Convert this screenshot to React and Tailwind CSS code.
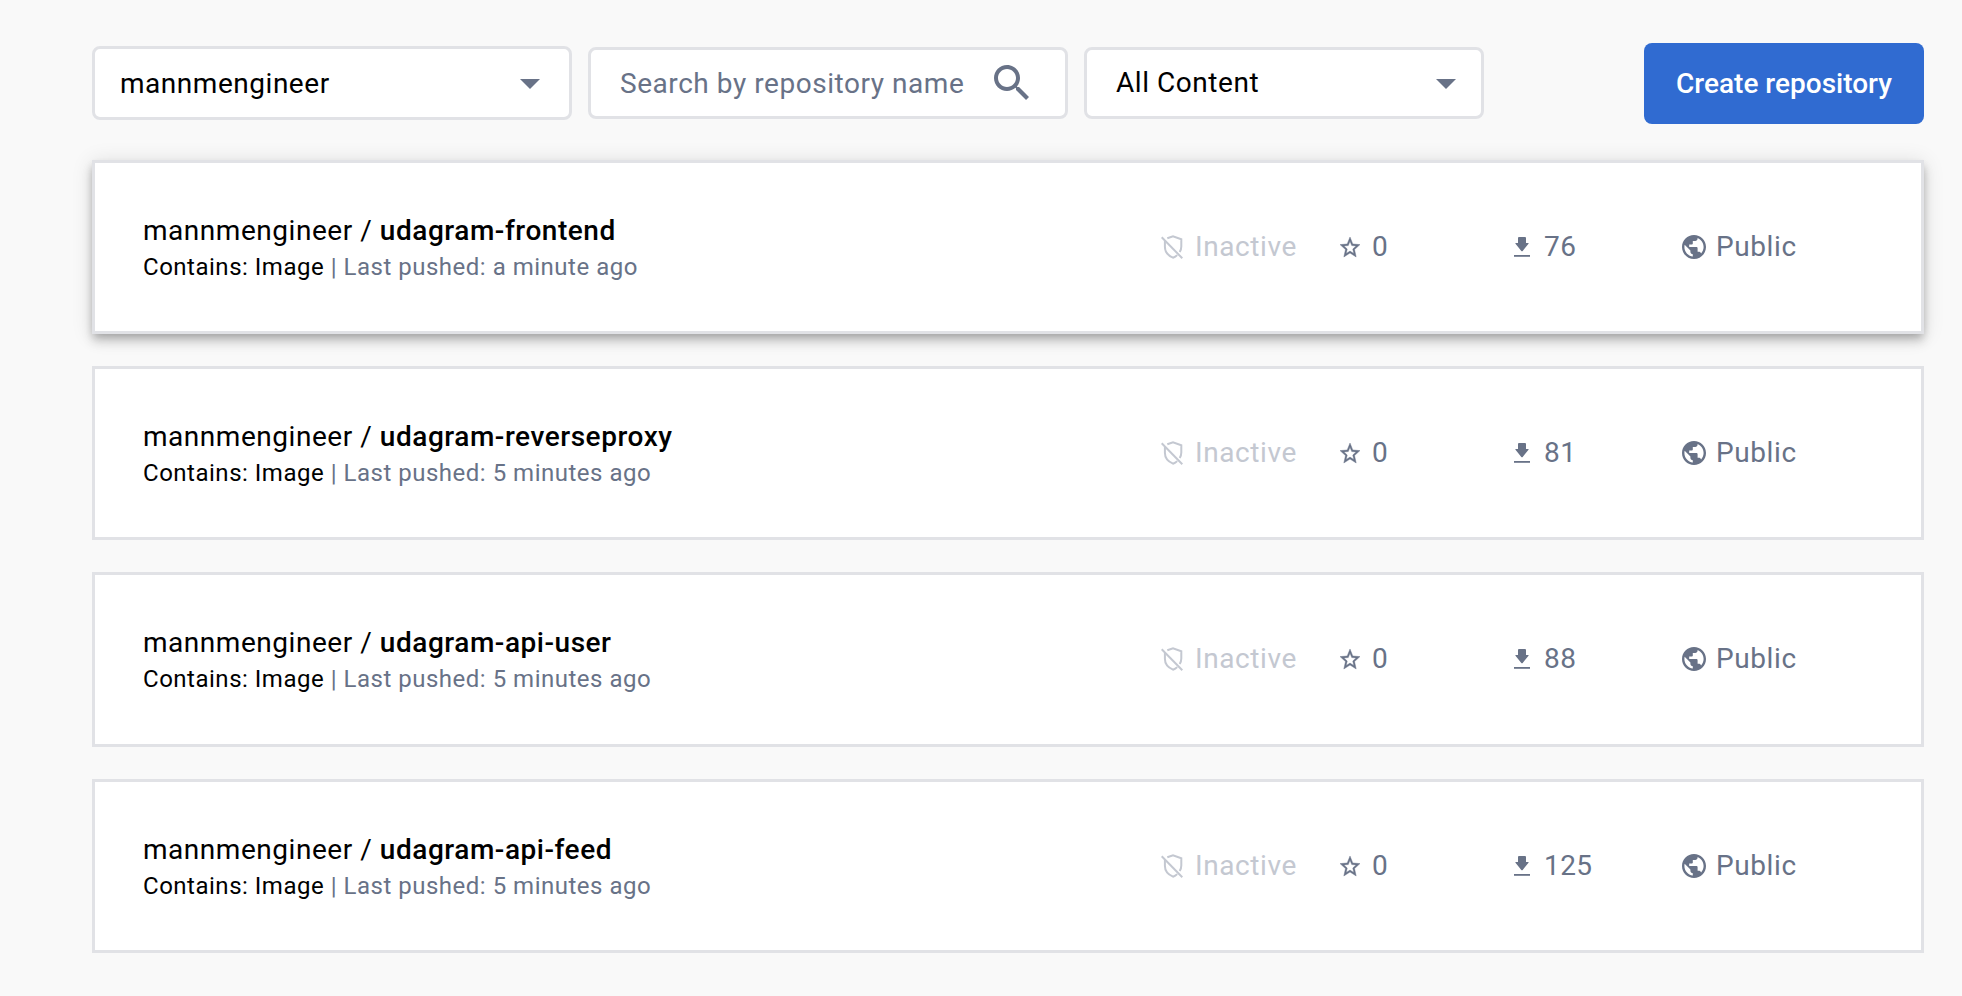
const repos = [
  { name: "udagram-frontend", pushed: "a minute ago", pulls: 76, size: "h-[174px] shadow-[0_4px_8px_-2px_rgba(0,0,0,0.2),0_8px_10px_rgba(0,0,0,0.14),0_2px_20px_rgba(0,0,0,0.12)]" },
  { name: "udagram-reverseproxy", pushed: "5 minutes ago", pulls: 81, size: "h-[174px]" },
  { name: "udagram-api-user", pushed: "5 minutes ago", pulls: 88, size: "h-[175px] pb-px" },
  { name: "udagram-api-feed", pushed: "5 minutes ago", pulls: 125, size: "h-[174px]" },
];

function Caret() {
  return (
    <svg viewBox="0 0 20 10" className="mt-px h-[10px] w-5 fill-[#687287]">
      <path d="M0 0h20L10 10z" />
    </svg>
  );
}

function SearchIcon() {
  return (
    <svg viewBox="3 3 17.49 17.49" className="mb-px size-[35px] fill-[#687287]">
      <path d="M15.5 14h-.79l-.28-.27C15.41 12.59 16 11.11 16 9.5 16 5.91 13.09 3 9.5 3S3 5.91 3 9.5 5.91 16 9.5 16c1.61 0 3.09-.59 4.23-1.57l.27.28v.79l5 4.99L20.49 19l-4.99-5zm-6 0C7.01 14 5 11.99 5 9.5S7.01 5 9.5 5 14 7.01 14 9.5 11.99 14 9.5 14z" />
    </svg>
  );
}

function ShieldOffIcon() {
  return (
    <svg viewBox="0 0 22 24" className="h-6 w-[22px] fill-none stroke-[#c4c8d1] stroke-2">
      <path d="M.7 2.300 21.300 23.300" />
      <path d="M6.300 3.200 12 1.200l8.300 3v7.300c0 2-.5 3.800-1.600 5.600" />
      <path d="M3.900 6v5.800c0 5 3.600 9 8.100 10.900 1.700-.6 3-1.400 4.200-2.600" />
    </svg>
  );
}

function StarIcon() {
  return (
    <svg viewBox="2 2 20 19" preserveAspectRatio="none" className="mb-px h-5 w-5 overflow-visible fill-[#687287] stroke-[#687287] stroke-[0.4]">
      <path d="M22 9.240l-7.190-.62L12 2 9.190 8.630 2 9.240l5.460 4.730L5.820 21 12 17.270 18.180 21l-1.630-7.030L22 9.240zM12 15.400l-3.760 2.270 1-4.280-3.320-2.880 4.380-.38L12 6.100l1.710 4.040 4.380.38-3.320 2.880 1 4.280L12 15.400z" />
    </svg>
  );
}

function DownloadIcon() {
  return (
    <svg viewBox="0 0 16 20" className="h-5 w-4 fill-[#687287]">
      <path d="M5 0h6q1 0 1 1v5h2.200q.8 0 .3.700L8.700 14q-.7.600-1.400 0L1.500 6.700q-.5-.7.300-.7H4V1q0-1 1-1z" />
      <path d="M0 18h16v1.800H0z" />
    </svg>
  );
}

function GlobeIcon() {
  return (
    <svg viewBox="2 2 20 20" className="size-6 fill-[#687287]">
      <path d="M12 2C6.480 2 2 6.480 2 12s4.480 10 10 10 10-4.480 10-10S17.520 2 12 2zm-1 17.930c-3.950-.49-7-3.850-7-7.930 0-.62.08-1.210.21-1.790L9 15v1c0 1.100.9 2 2 2v1.930zm6.900-2.540c-.26-.81-1-1.390-1.900-1.390h-1v-3c0-.55-.45-1-1-1H8v-2h2c.55 0 1-.45 1-1V7h2c1.100 0 2-.9 2-2v-.41c2.930 1.190 5 4.060 5 7.410 0 2.080-.8 3.970-2.100 5.390z" />
    </svg>
  );
}

function RepoCard({ repo }) {
  return (
    <article
      className={
        "flex items-center border-[3px] border-[#e1e2e6] bg-white pl-12 text-[28px] leading-9 text-[#687287] " +
        repo.size
      }
    >
      <div className="w-[1018px] pt-1">
        <h2 className="leading-9 font-normal tracking-[0.54px] text-black">
          mannmengineer / <span className="font-medium">{repo.name}</span>
        </h2>
        <p className="text-[24px] leading-9 tracking-[0.51px]">
          <span className="text-black">Contains: Image</span> | Last pushed: {repo.pushed}
        </p>
      </div>
      <div className="flex w-[179px] items-center gap-3 tracking-[0.6px] text-[#c4c8d1]">
        <ShieldOffIcon />
        Inactive
      </div>
      <div className="flex w-[174px] items-center gap-3">
        <StarIcon />0
      </div>
      <div className="flex w-[168px] items-center gap-[14px] tracking-[0.4px]">
        <DownloadIcon />
        {repo.pulls}
      </div>
      <div className="flex items-center gap-[10px] tracking-[0.6px]">
        <GlobeIcon />
        Public
      </div>
    </article>
  );
}

export default function App() {
  return (
    <main className="h-[996px] bg-[#f9f9f9] pr-[38px] pl-[92px] font-['Roboto',sans-serif] text-[28px] leading-9 text-black">
      <header className="flex h-[160px] items-start gap-4 pt-[43px]">
        <button className="mt-[3px] flex h-[74px] w-[480px] items-center justify-between rounded-lg border-[3px] border-[#e1e2e6] bg-white pr-[29px] pl-[25px] tracking-[0.53px]">
          <span className="pt-0.5">mannmengineer</span>
          <Caret />
        </button>
        <div className="mt-1 flex h-[72px] w-[480px] items-center justify-between rounded-lg border-[3px] border-[#e1e2e6] bg-white pr-9 pl-[29px] tracking-[0.55px] text-[#687287]">
          <span className="pt-0.5">Search by repository name</span>
          <SearchIcon />
        </div>
        <button className="mt-1 flex h-[72px] w-[400px] items-center justify-between rounded-lg border-[3px] border-[#e1e2e6] bg-white pr-[25px] pl-[29px] tracking-[0.55px]">
          All Content
          <Caret />
        </button>
        <button className="ml-auto h-[81px] w-[280px] rounded-lg bg-[#306bd1] font-medium tracking-normal text-white">
          Create repository
        </button>
      </header>
      <section className="flex flex-col gap-8">
        {repos.map((repo) => (
          <RepoCard key={repo.name} repo={repo} />
        ))}
      </section>
    </main>
  );
}
